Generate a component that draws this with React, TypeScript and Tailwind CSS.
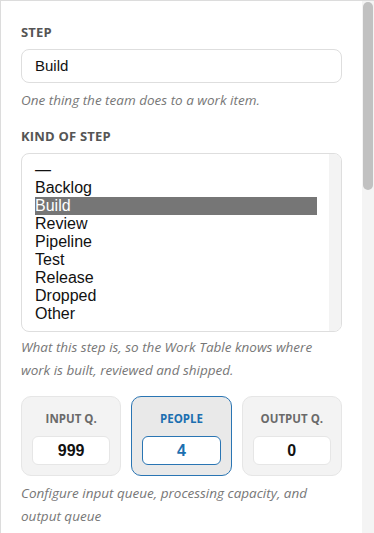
const kinds = ['—', 'Backlog', 'Build', 'Review', 'Pipeline', 'Test', 'Release', 'Dropped', 'Other'];

const Label = ({ children }: { children: React.ReactNode }) => (
  <div className="text-[13px] font-bold uppercase tracking-[0.2px] text-[#555] leading-[16px]">{children}</div>
);

const Help = ({ children }: { children: React.ReactNode }) => (
  <p className="text-[13.5px] italic text-[#777] leading-[23px]">{children}</p>
);

const Stat = ({ label, value, active }: { label: string; value: string; active?: boolean }) => (
  <div
    className={
      active
        ? 'flex flex-1 flex-col items-center rounded-[10px] border border-[#2a75b3] bg-[#e9e9e9] px-[10px] pt-[14px] pb-[10px]'
        : 'flex flex-1 flex-col items-center rounded-[10px] border border-[#e6e6e6] bg-[#f3f3f3] px-[10px] pt-[14px] pb-[10px]'
    }
  >
    <div className={active ? 'text-[11.5px] font-bold leading-[16px] text-[#1c6fb0]' : 'text-[11.5px] font-bold leading-[16px] text-[#6a6a6a]'}>
      {label}
    </div>
    <div
      className={
        active
          ? 'mt-[9px] flex h-[29px] w-full items-center justify-center rounded-[6px] border border-[#2a75b3] bg-white text-[16px] font-bold text-[#1c6fb0]'
          : 'mt-[9px] flex h-[29px] w-full items-center justify-center rounded-[6px] border border-[#e6e6e6] bg-white text-[16px] font-bold text-[#111]'
      }
      style={{ fontFamily: '"Liberation Sans", Arial, sans-serif' }}
    >
      {value}
    </div>
  </div>
);

export default function App() {
  return (
    <div className="flex h-[533px] w-[374px] overflow-hidden border-t border-l border-[#dcdcdc] bg-white font-['Open_Sans',sans-serif]">
      <div className="flex-1 px-[20px] pt-[23px]">
        <Label>Step</Label>
        <div className="mt-[9px] flex h-[34px] items-center rounded-[8px] border border-[#dedede] bg-white px-[13px] text-[15px] text-[#111] font-['Liberation_Sans',sans-serif]">
          Build
        </div>
        <div className="mt-[6px]">
          <Help>One thing the team does to a work item.</Help>
        </div>

        <div className="mt-[16px]">
          <Label>Kind of step</Label>
        </div>
        <div className="mt-[9px] flex h-[179px] overflow-hidden rounded-[8px] border border-[#dedede] bg-white">
          <div className="flex-1 pl-[13px] pr-[12px] pt-[7px] font-['Liberation_Sans',sans-serif] text-[16px] leading-[18px] text-[#111]">
            {kinds.map((k) => (
              <div key={k} className={k === 'Build' ? 'bg-[#767676] text-white' : ''}>
                {k}
              </div>
            ))}
          </div>
          <div className="w-[12px] bg-[#f3f3f3]" />
        </div>
        <div className="mt-[4px]">
          <Help>
            What this step is, so the Work Table knows where work is built, reviewed and shipped.
          </Help>
        </div>

        <div className="mt-[14px] flex gap-[10px]">
          <Stat label="INPUT Q." value="999" />
          <Stat label="PEOPLE" value="4" active />
          <Stat label="OUTPUT Q." value="0" />
        </div>
        <div className="mt-[6px]">
          <Help>Configure input queue, processing capacity, and output queue</Help>
        </div>
      </div>
      <div className="w-[12px] bg-[#f4f4f4] pt-[1px]">
        <div className="mx-auto h-[188px] w-[10px] rounded-full bg-[#c1c1c1]" />
      </div>
    </div>
  );
}
